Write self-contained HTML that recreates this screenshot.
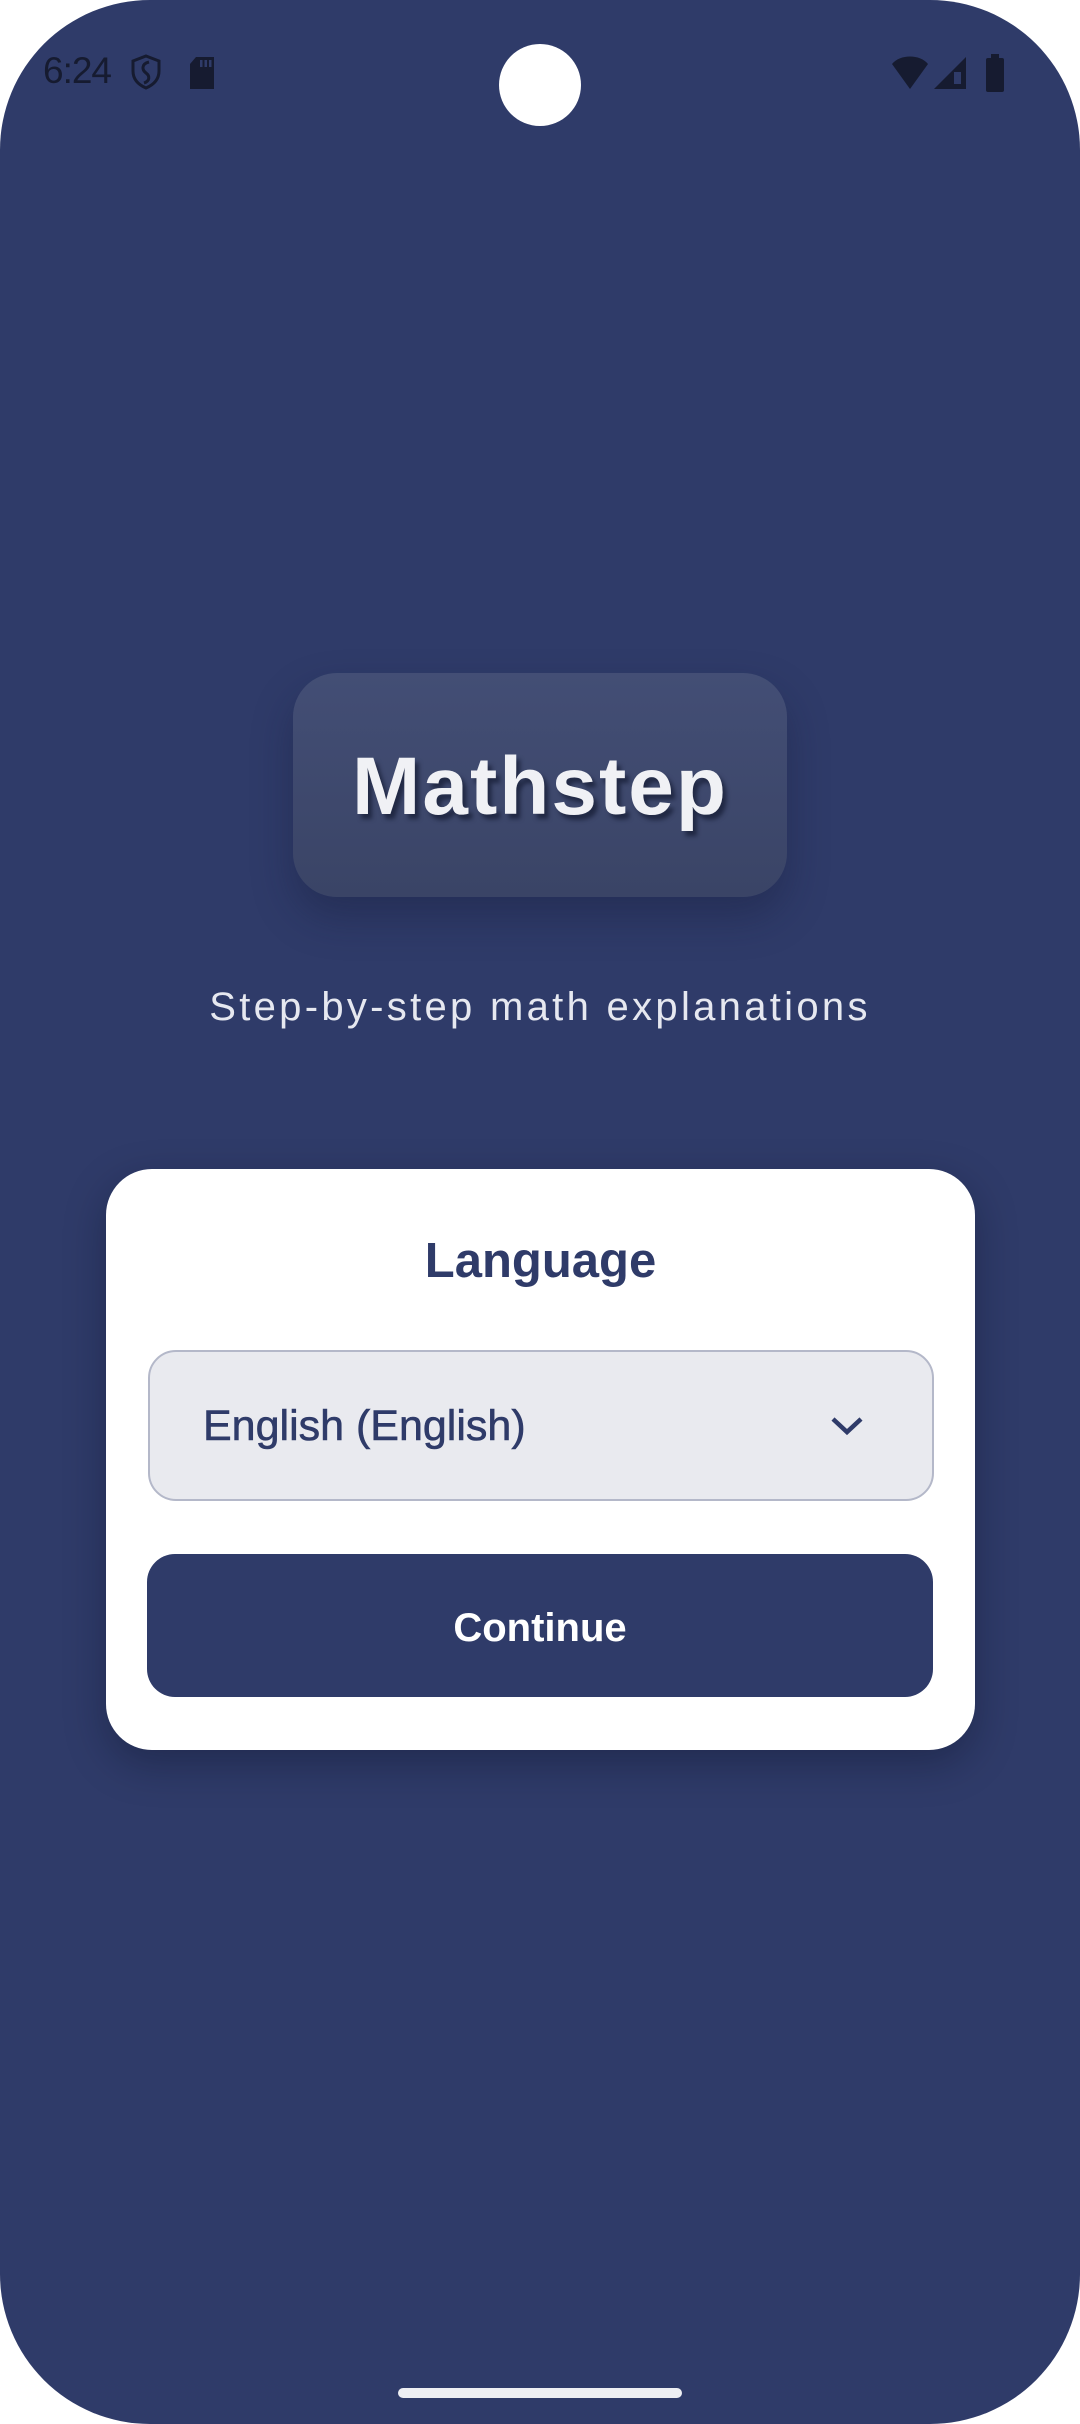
<!DOCTYPE html>
<html><head><meta charset="utf-8"><style>
html,body{margin:0;padding:0;background:#fff;}
body{width:1080px;height:2424px;position:relative;overflow:hidden;font-family:"Liberation Sans",sans-serif;}
.phone{position:absolute;left:0;top:0;width:1080px;height:2424px;background:#2f3b69;border-radius:150px;}
.abs{position:absolute;}
.time{left:43px;top:50px;font-size:37px;color:#161b30;letter-spacing:-1px;}
.cam{left:499px;top:44px;width:82px;height:82px;border-radius:50%;background:#fff;}
.logo{left:293px;top:673px;width:494px;height:224px;border-radius:44px;background:linear-gradient(#434e75,#3a4466);box-shadow:0 20px 40px rgba(20,25,55,.35);}
.logotxt{left:293px;width:494px;top:740px;line-height:1.15;text-align:center;font-size:82px;font-weight:bold;color:#f0f1f5;text-shadow:4px 5px 4px rgba(10,14,35,.55);letter-spacing:2px;}
.sub{left:0;width:1080px;top:985px;text-align:center;font-size:40px;color:#e6e8f0;letter-spacing:3.3px;}
.card{left:106px;top:1169px;width:869px;height:581px;border-radius:46px;background:#fff;box-shadow:0 14px 40px rgba(10,14,35,.35);}
.lang{left:106px;width:869px;top:1233px;text-align:center;font-size:49px;font-weight:bold;color:#2f3b69;}
.dd{left:148px;top:1350px;width:782px;height:147px;border:2px solid #b4b8c9;border-radius:28px;background:#e9eaef;}
.ddtxt{left:203px;top:1402px;font-size:43px;color:#2f3b69;-webkit-text-stroke:0.6px #2f3b69;}
.btn{left:147px;top:1554px;width:786px;height:143px;border-radius:28px;background:#2f3b69;}
.btntxt{left:147px;width:786px;top:1606px;text-align:center;font-size:40px;font-weight:bold;color:#fff;}
.home{left:398px;top:2388px;width:284px;height:10px;border-radius:5px;background:#eeeff3;}
</style></head><body>
<div class="phone"></div>
<div class="abs time">6:24</div>
<svg class="abs" style="left:130px;top:54px" width="32" height="36" viewBox="0 0 32 36"><path d="M16 2 L29 7 V17 C29 26 23 31 16 34 C9 31 3 26 3 17 V7 Z" fill="none" stroke="#161b30" stroke-width="3"/><path d="M19 8 C11 10 12 16 16 19 C20 22 20 27 14 29" fill="none" stroke="#161b30" stroke-width="3"/></svg>
<svg class="abs" style="left:188px;top:56px" width="28" height="34" viewBox="0 0 28 34"><path d="M8 1 H26 V33 H2 V8 Z" fill="#161b30"/><rect x="12" y="4" width="2.5" height="7" fill="#2f3b69"/><rect x="16.5" y="4" width="2.5" height="7" fill="#2f3b69"/><rect x="21" y="4" width="2.5" height="7" fill="#2f3b69"/></svg>
<div class="abs cam"></div>
<svg class="abs" style="left:890px;top:54px" width="40" height="36" viewBox="0 0 40 36"><path d="M2 10 C10 0 30 0 38 10 L20 35 Z" fill="#161b30"/></svg>
<svg class="abs" style="left:933px;top:56px" width="34" height="34" viewBox="0 0 34 34"><path d="M33 1 V33 H1 Z" fill="#161b30"/><path d="M21 16 V28 H28 V16 Z" fill="#2f3b69"/></svg>
<svg class="abs" style="left:984px;top:54px" width="22" height="38" viewBox="0 0 22 38"><rect x="7" y="0" width="8" height="5" fill="#161b30"/><rect x="2" y="4" width="18" height="34" rx="2" fill="#161b30"/></svg>
<div class="abs logo"></div>
<div class="abs logotxt">Mathstep</div>
<div class="abs sub">Step-by-step math explanations</div>
<div class="abs card"></div>
<div class="abs lang">Language</div>
<div class="abs dd"></div>
<div class="abs ddtxt">English (English)</div>
<svg class="abs" style="left:829px;top:1413px" width="36" height="26" viewBox="0 0 36 26"><path d="M4 6 L18 19 L32 6" fill="none" stroke="#2f3b69" stroke-width="4.5"/></svg>
<div class="abs btn"></div>
<div class="abs btntxt">Continue</div>
<div class="abs home"></div>
</body></html>
